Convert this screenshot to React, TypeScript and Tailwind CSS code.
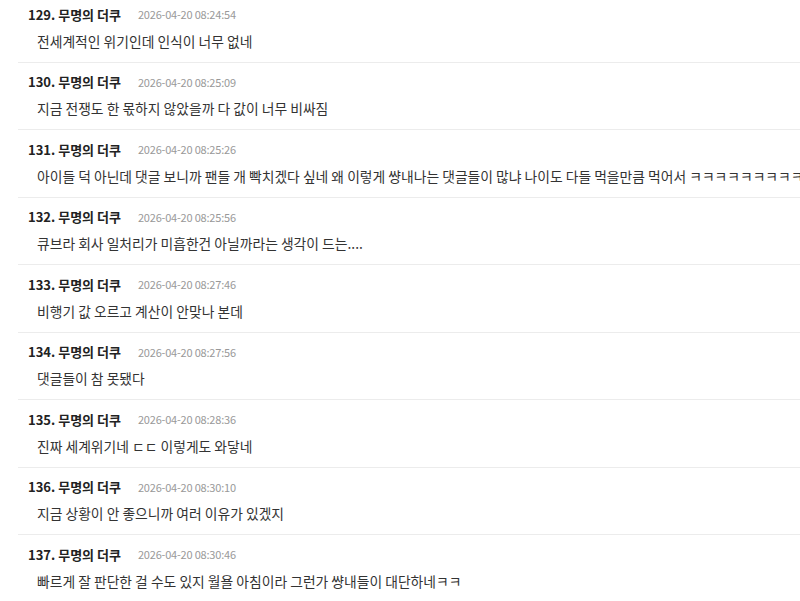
import React from "react";

const comments = [
  { no: 129, time: "2026-04-20 08:24:54", text: "전세계적인 위기인데 인식이 너무 없네" },
  { no: 130, time: "2026-04-20 08:25:09", text: "지금 전쟁도 한 몫하지 않았을까 다 값이 너무 비싸짐" },
  {
    no: 131,
    time: "2026-04-20 08:25:26",
    text: "아이들 덕 아닌데 댓글 보니까 팬들 개 빡치겠다 싶네 왜 이렇게 썅내나는 댓글들이 많냐 나이도 다들 먹을만큼 먹어서 ㅋㅋㅋㅋㅋㅋㅋㅋㅋㅋㅋㅋㅋ",
  },
  { no: 132, time: "2026-04-20 08:25:56", text: "큐브라 회사 일처리가 미흡한건 아닐까라는 생각이 드는...." },
  { no: 133, time: "2026-04-20 08:27:46", text: "비행기 값 오르고 계산이 안맞나 본데" },
  { no: 134, time: "2026-04-20 08:27:56", text: "댓글들이 참 못됐다" },
  { no: 135, time: "2026-04-20 08:28:36", text: "진짜 세계위기네 ㄷㄷ 이렇게도 와닿네" },
  { no: 136, time: "2026-04-20 08:30:10", text: "지금 상황이 안 좋으니까 여러 이유가 있겠지" },
  { no: 137, time: "2026-04-20 08:30:46", text: "빠르게 잘 판단한 걸 수도 있지 월욜 아침이라 그런가 썅내들이 대단하네ㅋㅋ" },
];

function CommentRow({ no, time, text }: { no: number; time: string; text: string }) {
  return (
    <li className="border-b border-[#ececec] pl-[10px] pt-[9.5px] pb-[11px]">
      <div className="flex items-center gap-[17px] h-5 whitespace-nowrap">
        <span className="text-[13px] font-bold text-[#222]">{no}. 무명의 더쿠</span>
        <span className="text-[11px] tracking-[-0.2px] text-[#999]">{time}</span>
      </div>
      <p className="mt-[6px] h-5 pl-[9px] text-[13.8px] leading-5 text-[#333] whitespace-nowrap">{text}</p>
    </li>
  );
}

export default function App() {
  return (
    <div
      className="h-[601px] w-[800px] overflow-hidden bg-white"
      style={{ fontFamily: '"Noto Sans CJK KR", "Noto Sans", sans-serif' }}
    >
      <ul className="-mt-[5px] pl-[18px]">
        {comments.map((c) => (
          <CommentRow key={c.no} {...c} />
        ))}
      </ul>
    </div>
  );
}
